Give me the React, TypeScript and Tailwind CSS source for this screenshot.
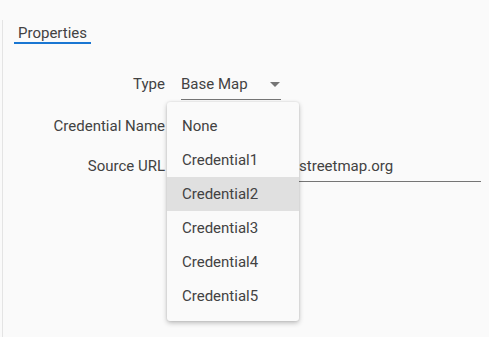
import React from "react";

const credentials = ["None", "Credential1", "Credential2", "Credential3", "Credential4", "Credential5"];

function Row({ label, children, className }: { label: string; children: React.ReactNode; className?: string }) {
    return (
        <div className={"flex h-[26px] items-start " + (className ?? "")}>
            <div className="w-[166px] shrink-0 pr-[1px] text-right text-[15px] leading-[20px] text-[#424242]">{label}</div>
            <div className="ml-[15px]">{children}</div>
        </div>
    );
}

export default function App() {
    return (
        <div className="h-[337px] w-[489px] overflow-hidden bg-[#fafafa] font-['Roboto',sans-serif] text-[#424242]">
            <div className="ml-[2px] mt-[20px] h-[317px] border-l border-[#e4e4e4]">
                <div className="ml-[11px] inline-block border-b-2 border-[#1976d2] px-[4px] pt-[4px] text-[15px] leading-[18px] text-[#424242]">
                    Properties
                </div>

                <div className="relative -ml-[3px] mt-[29px]">
                    <Row label="Type">
                        <div className="flex h-[26px] w-[100px] items-start justify-between border-b border-[#757575] text-[15px] leading-[20px]">
                            <span>Base Map</span>
                            <svg width="10" height="5" viewBox="0 0 10 5" className="mr-[1px] mt-[8px]">
                                <path d="M0 0 L10 0 L5 5 Z" fill="#757575" />
                            </svg>
                        </div>
                    </Row>
                    <Row label="Credential Name" className="mt-[16px]">
                        <div className="h-[26px] w-[300px]" />
                    </Row>
                    <Row label="Source URL" className="mt-[14px]">
                        <div className="h-[26px] w-[300px] border-b border-[#757575] text-[15px] leading-[20px]">
                            https://a.tile.openstreetmap.org
                        </div>
                    </Row>

                    {/* dropdown menu */}
                    <div className="absolute left-[167px] top-[28px] w-[132px] rounded-[3px] bg-[#fafafa] pt-[7px] pb-[8px] shadow-[0_2px_5px_rgba(0,0,0,0.25),0_0_2px_rgba(0,0,0,0.12)]">
                        {credentials.map((c) => (
                            <div
                                key={c}
                                className={
                                    "flex h-[34px] items-center px-[15px] text-[15px] text-[#424242] " +
                                    (c === "Credential2" ? "bg-[#e0e0e0]" : "")
                                }
                            >
                                {c}
                            </div>
                        ))}
                    </div>
                </div>
            </div>
        </div>
    );
}
